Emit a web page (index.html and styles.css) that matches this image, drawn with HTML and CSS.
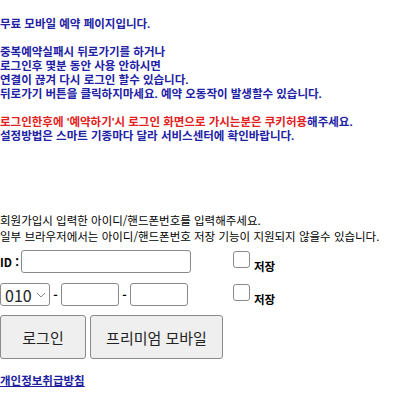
FILE: index.html
```html
<!DOCTYPE html>
<html lang="ko">
<head>
<meta charset="utf-8">
<link rel="stylesheet" href="styles.css">
</head>
<body>
<div class="notice">
  <div>무료 모바일 예약 페이지입니다.</div>
  <div class="blank"></div>
  <div>중복예약실패시 뒤로가기를 하거나</div>
  <div>로그인후 몇분 동안 사용 안하시면</div>
  <div>연결이 끊겨 다시 로그인 할수 있습니다.</div>
  <div>뒤로가기 버튼을 클릭하지마세요. 예약 오동작이 발생할수 있습니다.</div>
  <div class="blank"></div>
  <div><span class="red">로그인한후에 '예약하기'시 로그인 화면으로 가시는분은 쿠키허용</span>해주세요.</div>
  <div>설정방법은 스마트 기종마다 달라 서비스센터에 확인바랍니다.</div>
</div>
<div class="info">
  <div>회원가입시 입력한 아이디/핸드폰번호를 입력해주세요.</div>
  <div>일부 브라우저에서는 아이디/핸드폰번호 저장 기능이 지원되지 않을수 있습니다.</div>
</div>
<div class="form">
  <div class="row">
    <div class="field">
      <span class="label">ID :</span>
      <input class="txt id" type="text">
    </div>
    <label class="save"><span class="box"></span><span class="save-text">저장</span></label>
  </div>
  <div class="row row2">
    <div class="field">
      <div class="select"><span>010</span><svg class="chev" width="10" height="6" viewBox="0 0 10 6"><path d="M1 1 L5 5 L9 1" fill="none" stroke="#8a8a8a" stroke-width="1"/></svg></div>
      <span class="dash">-</span>
      <input class="txt ph" type="text">
      <span class="dash">-</span>
      <input class="txt ph" type="text">
    </div>
    <label class="save"><span class="box"></span><span class="save-text">저장</span></label>
  </div>
  <div class="buttons">
    <button class="btn login">로그인</button>
    <button class="btn premium">프리미엄 모바일</button>
  </div>
  <a class="privacy" href="#">개인정보취급방침</a>
</div>
</body>
</html>
```
FILE: styles.css
```css
html, body {
  margin: 0;
  padding: 0;
  background: #ffffff;
}
body {
  font-family: "Noto Sans CJK KR", "Noto Sans", sans-serif;
  color: #000;
}
.notice {
  margin-top: 17px;
  font-family: "Liberation Sans", "Noto Sans CJK KR", sans-serif;
  font-size: 11.5px;
  line-height: 14px;
  font-weight: bold;
  color: #2121a6;
  white-space: nowrap;
}
.notice .blank {
  height: 14px;
}
.notice .red {
  color: #e32020;
}
.info {
  margin-top: 69px;
  font-size: 11.5px;
  line-height: 16px;
  color: #000;
  white-space: nowrap;
}
.form {
  margin-top: 6px;
}
.row {
  display: flex;
  align-items: center;
  height: 23px;
}
.row2 {
  margin-top: 10px;
}
.field {
  width: 233px;
  display: flex;
  align-items: center;
}
.label {
  font-size: 11.5px;
  font-weight: bold;
  width: 21px;
}
.txt {
  box-sizing: border-box;
  height: 23px;
  border: 1px solid #8a8a8a;
  border-radius: 3px;
  margin: 0;
  padding: 0;
  background: #fff;
}
.id {
  width: 170px;
}
.select {
  box-sizing: border-box;
  width: 50px;
  height: 23px;
  border: 1px solid #8a8a8a;
  border-radius: 3px;
  display: flex;
  align-items: center;
  padding-left: 4px;
  gap: 4px;
  font-size: 16px;
  color: #222;
}
.chev {
  margin-top: 1px;
}
.dash {
  font-size: 12px;
  width: 11px;
  text-align: center;
  font-weight: bold;
}
.ph {
  width: 58px;
}
.save {
  display: flex;
  align-items: flex-end;
  height: 23px;
}
.box {
  box-sizing: border-box;
  width: 17px;
  height: 17px;
  border: 1px solid #8a8a8a;
  border-radius: 3px;
  margin-bottom: 5px;
}
.save-text {
  font-size: 11.5px;
  font-weight: bold;
  margin-left: 4px;
  line-height: 14px;
  margin-bottom: 0;
}
.buttons {
  display: flex;
  gap: 4px;
  margin-top: 9px;
}
.btn {
  box-sizing: border-box;
  height: 44px;
  border: 1px solid #8a8a8a;
  border-radius: 3px;
  background: #efefef;
  font-family: "Noto Sans CJK KR", "Noto Sans", sans-serif;
  font-size: 15px;
  color: #222;
  padding: 0;
  margin: 0;
}
.login {
  width: 86px;
}
.premium {
  width: 133px;
}
.privacy {
  display: inline-block;
  margin-top: 13px;
  font-size: 11.5px;
  font-weight: bold;
  color: #1e1ea0;
  text-decoration: underline;
}
```
